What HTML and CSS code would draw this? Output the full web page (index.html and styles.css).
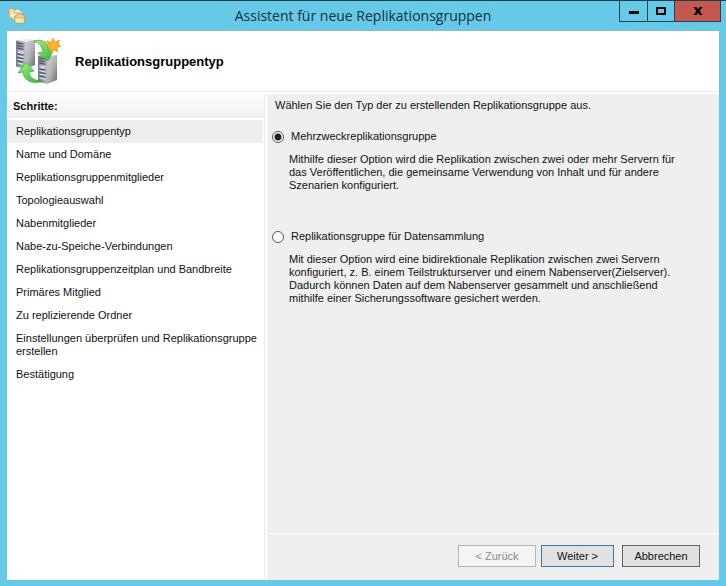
FILE: index.html
```html
<!DOCTYPE html>
<html lang="de">
<head>
<meta charset="utf-8">
<title>Assistent für neue Replikationsgruppen</title>
<link rel="stylesheet" href="styles.css">
</head>
<body>
<div class="window">
  <header class="titlebar">
    <svg class="app-icon" viewBox="0 0 18 18" aria-hidden="true">
      <path d="M1 3l1-1.500h3l1 1h5v5l-8 4-2-2z" fill="#f5dc98" stroke="#c69a52" stroke-width=".7"/>
      <path d="M6 4l4-2 5 4-2 1-3-2-3 1z" fill="#f4f8fb" stroke="#9a9fa5" stroke-width=".6"/>
      <path d="M4 7l2 4 3 1" fill="none" stroke="#f4f8fb" stroke-width="2.400"/>
      <path d="M6 10l2-1 2-2.500h3l1 1.500h2l1 2-1 6H7z" fill="#f3cf7c" stroke="#bf8f43" stroke-width=".7"/>
      <path d="M7 11h9v5H7z" fill="#fbe5a8" stroke="#c69a52" stroke-width=".5"/>
    </svg>
    <h1 class="title">Assistent für neue Replikationsgruppen</h1>
    <div class="controls">
      <button class="control minimize" type="button" aria-label="Minimieren">
        <svg class="glyph" viewBox="0 0 12 10"><path d="M1 5h10v3H1z" fill="#000"/></svg>
      </button>
      <button class="control maximize" type="button" aria-label="Maximieren">
        <svg class="glyph" viewBox="0 0 12 10"><path d="M2 2h8v6H2z" fill="none" stroke="#000" stroke-width="2"/></svg>
      </button>
      <button class="control close" type="button" aria-label="Schließen">
        <svg class="glyph" viewBox="0 0 12 10"><path d="M1.500 1h3L6 3.200 7.500 1h3L7.700 5l2.800 4h-3L6 6.800 4.500 9h-3l2.800-4z" fill="#000"/></svg>
      </button>
    </div>
  </header>
  <main class="client">
    <div class="banner">
      <svg class="banner-icon" viewBox="0 0 46 48" aria-hidden="true">
        <defs>
          <linearGradient id="side" x1="0" x2="1" y1="0" y2="1"><stop offset="0" stop-color="#d2d3d6"/><stop offset=".5" stop-color="#b2b3b7"/><stop offset="1" stop-color="#66686c"/></linearGradient>
          <linearGradient id="front" x1="0" x2="1"><stop offset="0" stop-color="#737b88"/><stop offset="1" stop-color="#b4bac5"/></linearGradient>
          <linearGradient id="arrow" x1="0" x2="1" y1="0" y2="1"><stop offset="0" stop-color="#a4f088"/><stop offset="1" stop-color="#32b832"/></linearGradient>
          <radialGradient id="star"><stop offset="0" stop-color="#ffc637"/><stop offset="1" stop-color="#f29420"/></radialGradient>
          <g id="server">
            <path d="M0 1.500L9 0l10 1-10 2z" fill="#e6e8eb"/>
            <path d="M9 3l10-2v25L9 30z" fill="url(#side)"/>
            <path d="M0 1.500L9 3v27l-9-2.500z" fill="url(#front)"/>
            <path d="M1.500 4.200l6 1M1.500 6.700l6 1M1.500 9.200l6 1M1.500 15l6 1.200M1.500 18.500l6 1.200M1.500 22l6 1.200" stroke="#465063"/>
            <path d="M1.500 11.700l6 1M1.500 13.300l6 1M1.500 16.700l6 1.200M1.500 20.200l6 1.200M1.500 24l6 1.300" stroke="#e9ecf2"/>
          </g>
        </defs>
        <use href="#server" x="1" y="1"/>
        <use href="#server" x="23" y="16"/>
        <path d="M19 3c9-3 15 3 16 10l4-2-6 12-10-8 5-1C27 9 25 4 19 4z" fill="url(#arrow)" stroke="#35a32e" stroke-width=".7"/>
        <path d="M27 43.500C16 47 8 41 8 34l-5 1 8-11 8 9-5 1c0 5 5 9 13 9z" fill="url(#arrow)" stroke="#35a32e" stroke-width=".7"/>
        <path d="M38 0l2 4 5-2-2 4 3 2-4 2 1 4-4-2-3 3-1-5-4-1 3-2-3-4 5 1z" fill="url(#star)" stroke="#f29420" stroke-width=".5"/>
      </svg>
      <h2 class="page-title">Replikationsgruppentyp</h2>
    </div>
    <div class="body">
      <nav class="steps" aria-labelledby="steps-title">
        <h3 class="steps-title" id="steps-title">Schritte:</h3>
        <ol class="step-list">
          <li class="step current" aria-current="step">Replikationsgruppentyp</li>
          <li class="step">Name und Domäne</li>
          <li class="step">Replikationsgruppenmitglieder</li>
          <li class="step">Topologieauswahl</li>
          <li class="step">Nabenmitglieder</li>
          <li class="step">Nabe-zu-Speiche-Verbindungen</li>
          <li class="step">Replikationsgruppenzeitplan und Bandbreite</li>
          <li class="step">Primäres Mitglied</li>
          <li class="step">Zu replizierende Ordner</li>
          <li class="step">Einstellungen überprüfen und Replikationsgruppe<br>erstellen</li>
          <li class="step">Bestätigung</li>
        </ol>
      </nav>
      <form class="panel">
        <fieldset class="choices">
          <legend class="prompt">Wählen Sie den Typ der zu erstellenden Replikationsgruppe aus.</legend>
          <div class="choice">
            <label class="choice-label"><input class="radio" type="radio" name="type" aria-describedby="d1" checked>Mehrzweckreplikationsgruppe</label>
            <p class="description" id="d1">Mithilfe dieser Option wird die Replikation zwischen zwei oder mehr Servern für<br>das Veröffentlichen, die gemeinsame Verwendung von Inhalt und für andere<br>Szenarien konfiguriert.</p>
          </div>
          <div class="choice">
            <label class="choice-label"><input class="radio" type="radio" name="type" aria-describedby="d2">Replikationsgruppe für Datensammlung</label>
            <p class="description" id="d2">Mit dieser Option wird eine bidirektionale Replikation zwischen zwei Servern<br>konfiguriert, z. B. einem Teilstrukturserver und einem Nabenserver(Zielserver).<br>Dadurch können Daten auf dem Nabenserver gesammelt und anschließend<br>mithilfe einer Sicherungssoftware gesichert werden.</p>
          </div>
        </fieldset>
        <div class="actions">
          <div class="navigation">
            <button class="button" type="button" disabled>&lt; Zurück</button>
            <button class="button next" type="button">Weiter &gt;</button>
          </div>
          <button class="button" type="button">Abbrechen</button>
        </div>
      </form>
    </div>
  </main>
</div>
</body>
</html>
```
FILE: styles.css
```css
* { box-sizing: border-box; }
body {
  margin: 0;
  color: #111;
  font: 11px/13px "Liberation Sans", Arial, sans-serif;
}
h1, h2, h3, p, ol, fieldset { margin: 0; padding: 0; }
.window {
  display: flex;
  flex-direction: column;
  min-height: 100vh;
  padding: 0 7px 6px;
  background: #67c9e8;
  border-top: 1px solid #173f4b;
}
.titlebar {
  display: grid;
  grid-template-columns: 1fr auto 1fr;
  align-items: start;
  height: 29px;
}
.app-icon { width: 18px; height: 18px; margin: 6px 0 0 1px; }
.title {
  color: #12303b;
  font: 14px/30px "Open Sans", "Segoe UI", sans-serif;
}
.controls {
  display: flex;
  justify-self: end;
  margin-right: -2px;
  border: 1px solid #23444f;
  border-top: 0;
}
.control {
  display: flex;
  align-items: center;
  justify-content: center;
  width: 27px;
  height: 20px;
  padding: 0;
  background: transparent;
  border: 0;
}
.control + .control { border-left: 1px solid #23444f; }
.control.close { width: 46px; background: #c4584f; }
.glyph { width: 12px; height: 10px; }
.client {
  display: flex;
  flex: 1;
  flex-direction: column;
  background: #fff;
  border-top: 1px solid #8fb9c8;
}
.banner {
  display: flex;
  align-items: center;
  gap: 14px;
  height: 61px;
  padding: 1px 8px 0;
  border-bottom: 1px solid #ececec;
}
.banner-icon { width: 46px; height: 48px; }
.page-title { color: #000; font-size: 13px; line-height: 16px; }
.body {
  display: grid;
  flex: 1;
  grid-template-columns: 260px 1fr;
  padding-top: 2px;
}
.steps {
  margin-right: 2px;
  border-right: 1px solid #ececec;
}
.steps-title {
  height: 24px;
  padding: 6px;
  background: linear-gradient(#fdfdfd, #f1f1f1);
  font-size: 11px;
  line-height: 13px;
}
.step-list { padding-top: 2px; list-style: none; }
.step { margin-right: 1px; padding: 5px 0 5px 9px; }
.step.current { background: #eee; }
.panel {
  display: flex;
  flex-direction: column;
  padding-top: 5px;
  background: #efefef;
}
.choices { flex: 1; padding: 0 5px 16px; border: 0; }
.prompt { padding: 0 3px; }
.choice { margin-top: 18px; }
.choice + .choice { margin-top: 38px; }
.choice-label { display: flex; align-items: center; gap: 7px; }
.radio {
  width: 12px;
  height: 12px;
  margin: 0;
  appearance: none;
  background: #fff;
  border: 1px solid #555;
  border-radius: 50%;
}
.radio:checked { background: radial-gradient(circle, #222 3px, #fff 4px); }
.description { margin-top: 10px; padding-left: 17px; }
.actions {
  display: flex;
  justify-content: flex-end;
  gap: 8px;
  padding: 11px 19px 13px;
  border-top: 1px solid #fff;
}
.navigation { display: flex; gap: 5px; }
.button {
  width: 78px;
  height: 22px;
  padding: 0;
  color: #111;
  background: #e1e1e1;
  border: 1px solid #606060;
  font: inherit;
}
.button.next { width: 73px; border-color: #3c78a8; }
.button:disabled { color: #8a8a8a; background: #f4f4f4; border-color: #b5b5b5; }
```
